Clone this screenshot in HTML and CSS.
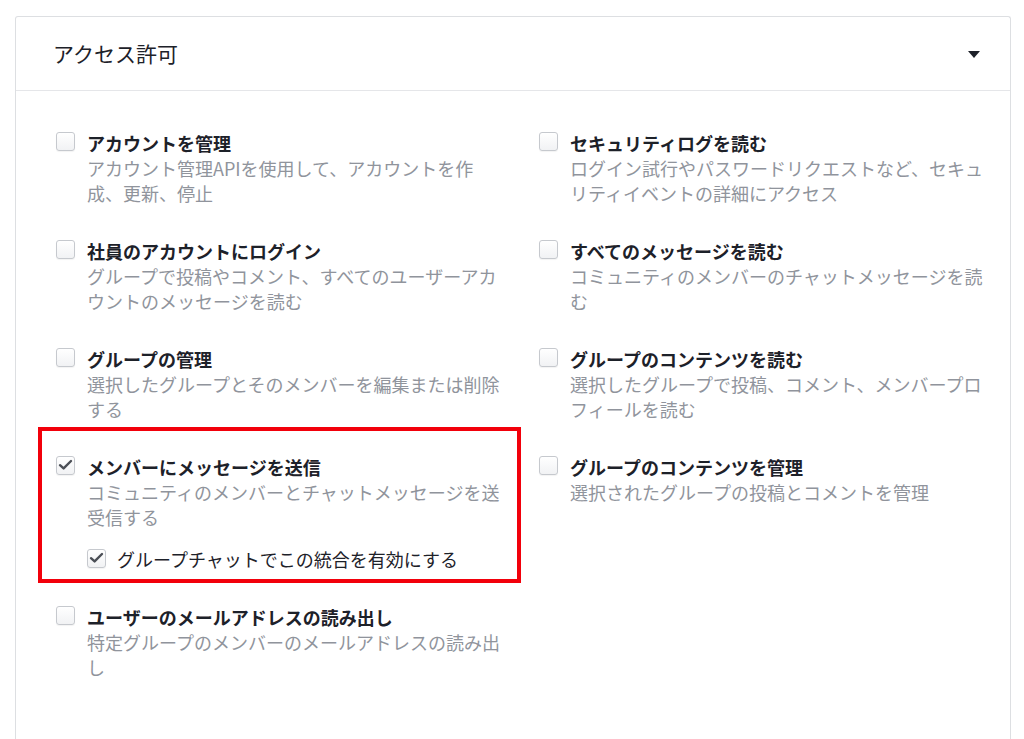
FILE: index.html
```html
<!DOCTYPE html>
<html lang="ja">
<head>
<meta charset="utf-8">
<title>アクセス許可</title>
<link rel="stylesheet" href="styles.css">
</head>
<body>
<section class="card">
  <header class="card-header">
    <h2 class="card-title">アクセス許可</h2>
    <span class="caret" aria-hidden="true"></span>
  </header>
  <div class="card-body">
    <div class="perm">
      <span class="cb"></span>
      <div class="perm-text">
        <div class="perm-title">アカウントを管理</div>
        <div class="perm-desc">アカウント管理APIを使用して、アカウントを作成、更新、停止</div>
      </div>
    </div>
    <div class="perm">
      <span class="cb"></span>
      <div class="perm-text">
        <div class="perm-title">セキュリティログを読む</div>
        <div class="perm-desc">ログイン試行やパスワードリクエストなど、セキュリティイベントの詳細にアクセス</div>
      </div>
    </div>
    <div class="perm">
      <span class="cb"></span>
      <div class="perm-text">
        <div class="perm-title">社員のアカウントにログイン</div>
        <div class="perm-desc">グループで投稿やコメント、すべてのユーザーアカウントのメッセージを読む</div>
      </div>
    </div>
    <div class="perm">
      <span class="cb"></span>
      <div class="perm-text">
        <div class="perm-title">すべてのメッセージを読む</div>
        <div class="perm-desc">コミュニティのメンバーのチャットメッセージを読む</div>
      </div>
    </div>
    <div class="perm">
      <span class="cb"></span>
      <div class="perm-text">
        <div class="perm-title">グループの管理</div>
        <div class="perm-desc">選択したグループとそのメンバーを編集または削除する</div>
      </div>
    </div>
    <div class="perm">
      <span class="cb"></span>
      <div class="perm-text">
        <div class="perm-title">グループのコンテンツを読む</div>
        <div class="perm-desc">選択したグループで投稿、コメント、メンバープロフィールを読む</div>
      </div>
    </div>
    <div class="perm highlighted">
      <span class="cb checked"><svg viewBox="0 0 19 19" width="19" height="19"><path d="M4 9.2 L7.6 12.4 L15 5" fill="none" stroke="#4b4f56" stroke-width="2.4" stroke-linecap="round" stroke-linejoin="round"/></svg></span>
      <div class="perm-text">
        <div class="perm-title">メンバーにメッセージを送信</div>
        <div class="perm-desc">コミュニティのメンバーとチャットメッセージを送受信する</div>
        <div class="sub-opt">
          <span class="cb checked sub-cb"><svg viewBox="0 0 19 19" width="19" height="19"><path d="M4 9.2 L7.6 12.4 L15 5" fill="none" stroke="#4b4f56" stroke-width="2.4" stroke-linecap="round" stroke-linejoin="round"/></svg></span>
          <span class="sub-label">グループチャットでこの統合を有効にする</span>
        </div>
      </div>
    </div>
    <div class="perm">
      <span class="cb"></span>
      <div class="perm-text">
        <div class="perm-title">グループのコンテンツを管理</div>
        <div class="perm-desc">選択されたグループの投稿とコメントを管理</div>
      </div>
    </div>
    <div class="perm">
      <span class="cb"></span>
      <div class="perm-text">
        <div class="perm-title">ユーザーのメールアドレスの読み出し</div>
        <div class="perm-desc">特定グループのメンバーのメールアドレスの読み出し</div>
      </div>
    </div>
  </div>
</section>
</body>
</html>
```

FILE: styles.css
```css
html, body {
  margin: 0;
  padding: 0;
  background: #ffffff;
}

body {
  font-family: "Noto Sans CJK JP", "Noto Sans", "Liberation Sans", sans-serif;
  color: #1d2129;
  padding: 16px 13px 0 15px;
  overflow: hidden;
}

.card {
  border: 1px solid #dddfe2;
  border-bottom: none;
  border-radius: 3px 3px 0 0;
  background: #fff;
  min-height: 760px;
}

.card-header {
  height: 74px;
  border-bottom: 1px solid #e5e6e9;
  display: flex;
  align-items: center;
  justify-content: space-between;
  padding: 0 30px 2px 37px;
  box-sizing: border-box;
}

.card-title {
  margin: 0;
  font-size: 21px;
  font-weight: 400;
  line-height: 28px;
  color: #1d2129;
}

.caret {
  width: 0;
  height: 0;
  border-left: 6.5px solid transparent;
  border-right: 6.5px solid transparent;
  border-top: 7px solid #1d2129;
  margin-top: 3px;
}

.card-body {
  display: grid;
  grid-template-columns: 449px 449px;
  column-gap: 34px;
  row-gap: 33px;
  padding: 40px 22px 40px 40px;
  align-items: start;
}

.perm {
  display: flex;
  align-items: flex-start;
  gap: 12px;
  position: relative;
}

.perm-text {
  width: 418px;
  font-size: 18px;
  line-height: 25px;
}

.perm-title {
  font-weight: 700;
  color: #1d2129;
}

.perm-desc {
  color: #90949c;
}

.cb {
  flex: none;
  width: 19px;
  height: 19px;
  box-sizing: border-box;
  border: 1px solid #c6c9ce;
  border-radius: 3px;
  background: linear-gradient(#ffffff, #f1f2f4);
  box-shadow: 0 1px 1px rgba(0, 0, 0, 0.05);
  margin-top: 1px;
  position: relative;
}

.cb svg {
  position: absolute;
  left: -1px;
  top: -1px;
}

.sub-opt {
  display: flex;
  align-items: flex-start;
  gap: 11px;
  margin-top: 17px;
  color: #1d2129;
}

.sub-cb {
  margin-top: 2px;
}

.highlighted::after {
  content: "";
  position: absolute;
  top: -28px;
  left: -18px;
  right: -16px;
  bottom: -11px;
  border: 4px solid #f2000b;
  pointer-events: none;
}
```
